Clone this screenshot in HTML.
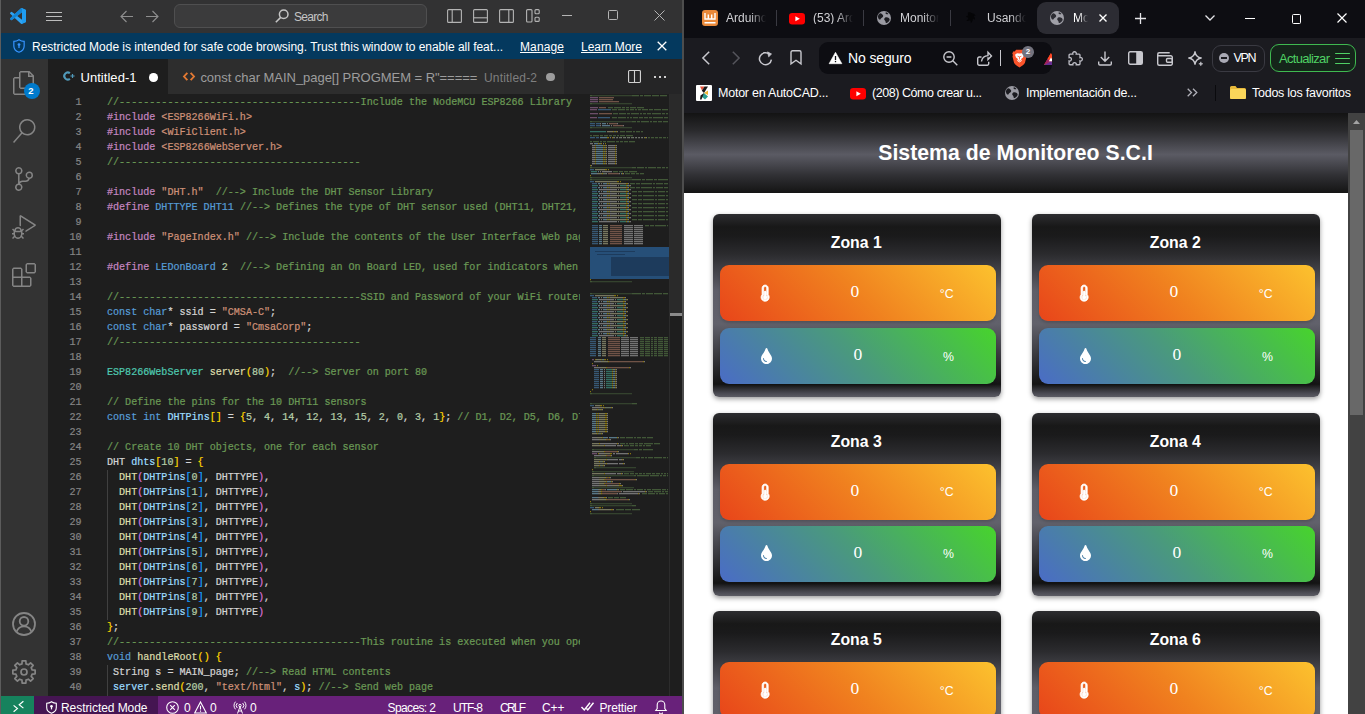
<!DOCTYPE html>
<html lang="es">
<head>
<meta charset="utf-8">
<title>Screenshot</title>
<style>
*{box-sizing:border-box;margin:0;padding:0}
html,body{width:1365px;height:714px;overflow:hidden;background:#1e1e1e}
body{position:relative;font-family:"Liberation Sans",sans-serif;color:#ccc}
.abs{position:absolute}
.tx{position:absolute;white-space:pre;line-height:1;display:block}
svg{position:absolute;overflow:visible}
/* ---------- VS CODE ---------- */
#vsc{position:absolute;left:0;top:0;width:684px;height:714px;background:#1e1e1e;overflow:hidden}
#vsc .lb{position:absolute;left:0;top:0;width:1px;height:714px;background:#5c5c5c;z-index:20}
#vsc .rb{position:absolute;left:682px;top:0;width:2px;height:714px;background:#4d4d4d;z-index:20}
#tbar{position:absolute;left:0;top:0;width:684px;height:33px;background:#323233}
#search{position:absolute;left:174px;top:4px;width:253px;height:24px;border:1px solid #4f4f50;border-radius:6px;background:#3b3b3c}
#banner{position:absolute;left:0;top:33px;width:684px;height:26px;background:#04395e}
#actbar{position:absolute;left:0;top:59px;width:48px;height:637px;background:#333333}
#tabs{position:absolute;left:48px;top:59px;width:636px;height:35px;background:#252526}
#tab1{position:absolute;left:0;top:0;width:119.5px;height:35px;background:#1e1e1e}
#tab2{position:absolute;left:119.5px;top:0;width:396px;height:35px;background:#2d2d2d}
#code{position:absolute;left:48px;top:95px;width:533.5px;height:601px;overflow:hidden;-webkit-text-stroke:.22px;font-family:"Liberation Mono",monospace;font-size:10.07px;line-height:15px;color:#d4d4d4;white-space:pre}
#code .ln{position:absolute;left:0;width:33.5px;text-align:right;color:#858585}
#code .cl{position:absolute;left:59px}
.xc{color:#6a9955}.xp{color:#c586c0}.xs{color:#ce9178}.xk{color:#569cd6}.xv{color:#9cdcfe}.xt{color:#4ec9b0}.xn{color:#b5cea8}.xf{color:#dcdcaa}.xb1{color:#ffd700}.xb2{color:#da70d6}.xb3{color:#179fff}
#mini{position:absolute;left:580px;top:94px;width:102px;height:602px;background:#1e1e1e;overflow:hidden}
#status{position:absolute;left:0;top:696px;width:684px;height:18px;background:#68217a;overflow:hidden}
#status .r{position:absolute;left:0;top:0;width:34px;height:18px;background:#16825d}
#status .rm{position:absolute;left:34px;top:0;width:123.5px;height:18px;background:#451552}
/* ---------- BROWSER ---------- */
#br{position:absolute;left:684px;top:0;width:681px;height:714px;background:#fff;overflow:hidden}
#btabs{position:absolute;left:0;top:0;width:681px;height:38px;background:#0d0d12}
#btool{position:absolute;left:0;top:38px;width:681px;height:75px;background:#1b1b20}
#atab{position:absolute;left:353px;top:2px;width:82px;height:32px;border-radius:9px;background:#2c2c33}
#addr{position:absolute;left:135px;top:42px;width:233px;height:32px;border-radius:9px;background:#0d0d12;overflow:hidden}
#vpn{position:absolute;left:527.5px;top:44.5px;width:53px;height:27px;border:1px solid #3a3a42;border-radius:9px}
#upd{position:absolute;left:586px;top:44px;width:86px;height:28px;border:1.5px solid #3fb950;border-radius:9px;background:#15251a}
.tsep{position:absolute;top:10px;width:1px;height:16px;background:#3a3a42}
#page{position:absolute;left:0;top:113px;width:664px;height:601px;background:#fff;overflow:hidden}
#phead{position:absolute;left:0;top:0;width:664px;height:80px;background:linear-gradient(180deg,#131313 0%,#2a2a2d 22%,#5b5b64 52%,#303034 78%,#141414 100%)}
.card{position:absolute;width:287.5px;height:183px;border-radius:6px;background:linear-gradient(180deg,#2d2d30 0%,#181818 7%,#1a1a1b 12%,#2b2b2e 22%,#5e5e68 42%,#61616b 60%,#141414 93%,#4a4a52 98%,#5c5c64 100%);box-shadow:0 2px 5px rgba(0,0,0,.4)}
.row{position:absolute;left:7px;width:276px;height:56px;border-radius:9px;box-shadow:0 2px 3px rgba(0,0,0,.16)}
.row.tp{top:51px;background:linear-gradient(45deg,#e8451a 0%,#f0821f 50%,#fcc22e 100%)}
.row.hm{top:114px;background:linear-gradient(45deg,#4a6cc6 0%,#4a9a7c 50%,#47d42c 100%)}
#sb{position:absolute;left:664px;top:113px;width:17px;height:601px;background:#424242}
#sb .th{position:absolute;left:2px;top:17px;width:13px;height:285px;background:#686868}
</style>
</head>
<body>
<div id="vsc">
<div class="lb"></div><div class="rb"></div>
<div id="tbar">
<svg style="left:10px;top:8px" width="16" height="16" viewBox="0 0 100 100"><path d="M96.5 10.8 75.9 0.9a6.2 6.2 0 0 0-7.1 1.2L29.4 38.1 12.2 25.1a4.2 4.2 0 0 0-5.3.2L1.4 30.3a4.2 4.2 0 0 0 0 6.2L16.3 50 1.4 63.5a4.2 4.2 0 0 0 0 6.2l5.5 5a4.2 4.2 0 0 0 5.3.2l17.2-13 39.4 36a6.2 6.2 0 0 0 7.1 1.2l20.6-9.9A6.2 6.2 0 0 0 100 83.6V16.4a6.2 6.2 0 0 0-3.5-5.6zM75 72.7 45.1 50 75 27.3z" fill="#2ea3f2"/><path d="M75.9 99.1a6.2 6.2 0 0 1-7.1-1.2c2.3 2.3 6.2.7 6.2-2.6V4.7c0-3.3-3.9-4.9-6.2-2.6a6.2 6.2 0 0 1 7.1-1.2l20.6 9.9a6.2 6.2 0 0 1 3.5 5.6v67.2a6.2 6.2 0 0 1-3.5 5.6z" fill="#1f9cf0"/><path d="M1.400 63.500 68.800 2.100C71.100-.2 75 1.400 75 4.700v22.600L12.200 74.900a4.200 4.200 0 0 1-5.300-.2l-5.500-5a4.200 4.200 0 0 1 0-6.200z" fill="#0b7fd0" opacity=".85"/></svg>
<div class="abs" style="left:46px;top:12px;width:16px;height:1px;background:#bdbdbd"></div>
<div class="abs" style="left:46px;top:16px;width:16px;height:1px;background:#bdbdbd"></div>
<div class="abs" style="left:46px;top:20px;width:16px;height:1px;background:#bdbdbd"></div>
<svg style="left:120px;top:10px" width="14" height="13" viewBox="0 0 14 13" fill="none" stroke="#8f8f8f" stroke-width="1.1"><path d="M13 6.5H1.2M6.5 1 1 6.5 6.5 12"/></svg>
<svg style="left:145px;top:10px" width="14" height="13" viewBox="0 0 14 13" fill="none" stroke="#8f8f8f" stroke-width="1.1"><path d="M1 6.5h11.8M7.5 1 13 6.5 7.5 12"/></svg>
<div id="search"></div>
<svg style="left:275px;top:8.5px" width="14" height="14" viewBox="0 0 14 14" fill="none" stroke="#c5c5c5" stroke-width="1.5"><circle cx="8.7" cy="5.3" r="4.3"/><path d="M5.7 8.4 0.8 13.3"/></svg>
<!-- layout icons -->
<svg style="left:447px;top:9px" width="15" height="14" viewBox="0 0 15 14" fill="none" stroke="#b4b4b4" stroke-width="1.1"><rect x=".6" y=".6" width="13.8" height="12.8" rx="1"/><path d="M5.2.6v12.8"/></svg>
<svg style="left:473px;top:9px" width="15" height="14" viewBox="0 0 15 14" fill="none" stroke="#b4b4b4" stroke-width="1.1"><rect x=".6" y=".6" width="13.8" height="12.8" rx="1"/><path d="M.6 8.8h13.8"/></svg>
<svg style="left:499px;top:9px" width="15" height="14" viewBox="0 0 15 14" fill="none" stroke="#b4b4b4" stroke-width="1.1"><rect x=".6" y=".6" width="13.8" height="12.8" rx="1"/><path d="M9.8.6v12.8"/></svg>
<svg style="left:526px;top:9px" width="14" height="14" viewBox="0 0 14 14" fill="none" stroke="#b4b4b4" stroke-width="1.1"><rect x=".6" y=".6" width="5.4" height="12.4" rx="1"/><rect x="9" y=".6" width="4.2" height="4.2" rx="1"/><rect x="9" y="8.2" width="4.2" height="4.2" rx="1"/></svg>
<div class="abs" style="left:562px;top:15px;width:10px;height:1px;background:#b4b4b4"></div>
<div class="abs" style="left:608px;top:10px;width:10px;height:10px;border:1px solid #b4b4b4;border-radius:1.5px"></div>
<svg style="left:654px;top:10px" width="11" height="11" viewBox="0 0 11 11" fill="none" stroke="#b4b4b4" stroke-width="1"><path d="M.5.5l10 10M10.5.5l-10 10"/></svg>
</div>
<div id="banner">
<svg style="left:12.5px;top:6px" width="12" height="14" viewBox="0 0 11 13"><path d="M5.5.7C4 1.7 2.4 2.2.7 2.2v4.3c0 2.7 1.9 4.8 4.8 5.8 2.9-1 4.8-3.1 4.8-5.8V2.2C8.6 2.2 7 1.7 5.5.7z" fill="none" stroke="#3794ff" stroke-width="1.1"/><circle cx="5.5" cy="5.2" r="1.3" fill="#3794ff"/><rect x="4.9" y="5.8" width="1.2" height="2.6" fill="#3794ff"/></svg>
<svg style="left:657px;top:8px" width="10" height="10" viewBox="0 0 10 10" fill="none" stroke="#fff" stroke-width="1.3"><path d="M.7.7l8.6 8.6M9.3.7l-8.6 8.6"/></svg>
</div>
<div id="actbar">
<!-- files -->
<svg style="left:12px;top:12px" width="24" height="24" viewBox="0 0 24 24"><path fill="#858585" d="M17.5 0h-9L7 1.5V6H2.5L1 7.5v15.07L2.5 24h12.07L16 22.57V18h4.7l1.3-1.43V4.5L17.5 0zm0 2.120 2.380 2.380H17.5V2.120zm-3 20.380h-12v-15H7v9.07L8.5 18h6v4.5zm6-6h-12v-15H16V6h4.5v10.5z"/></svg>
<div class="abs" style="left:23.5px;top:24px;width:16px;height:16px;border-radius:8px;background:#007acc"></div>
<!-- search -->
<svg style="left:12px;top:60px" width="24" height="24" viewBox="0 0 24 24"><path fill="#858585" d="M15.25 0a8.25 8.25 0 0 0-6.18 13.72L1 22.88l1.120 1 8.05-9.120A8.251 8.251 0 1 0 15.25.01V0zm0 15a6.75 6.75 0 1 1 0-13.5 6.75 6.75 0 0 1 0 13.5z"/></svg>
<!-- scm -->
<svg style="left:12px;top:108px" width="24" height="24" viewBox="0 0 24 24"><path fill="#858585" d="M21.007 8.222A3.738 3.738 0 0 0 15.045 5.2a3.737 3.737 0 0 0 1.156 6.583 2.988 2.988 0 0 1-2.668 1.67h-2.99a4.456 4.456 0 0 0-2.989 1.165V7.4a3.737 3.737 0 1 0-1.494 0v9.117a3.776 3.776 0 1 0 1.816.099 2.99 2.99 0 0 1 2.668-1.667h2.99a4.484 4.484 0 0 0 4.223-3.039 3.736 3.736 0 0 0 3.25-3.687zM4.565 3.738a2.242 2.242 0 1 1 4.484 0 2.242 2.242 0 0 1-4.484 0zm4.484 16.441a2.242 2.242 0 1 1-4.484 0 2.242 2.242 0 0 1 4.484 0zm8.221-9.715a2.242 2.242 0 1 1 0-4.485 2.242 2.242 0 0 1 0 4.485z"/></svg>
<!-- debug -->
<svg style="left:12px;top:156px" width="24" height="24" viewBox="0 0 24 24"><path fill="#858585" d="M10.94 13.5l-1.32 1.32a3.73 3.73 0 0 0-7.24 0L1.06 13.5 0 14.56l1.72 1.72-.22.22V18H0v1.5h1.5v.08c.077.489.214.966.41 1.42L0 22.94 1.06 24l1.65-1.65A4.308 4.308 0 0 0 6 24a4.31 4.31 0 0 0 3.29-1.65L10.94 24 12 22.94 10.09 21c.198-.464.336-.951.41-1.45v-.1H12V18h-1.5v-1.5l-.22-.22L12 14.56l-1.06-1.06zM6 13.5a2.25 2.25 0 0 1 2.25 2.25h-4.5A2.25 2.25 0 0 1 6 13.5zm3 6a3.33 3.33 0 0 1-3 3 3.33 3.33 0 0 1-3-3v-2.25h6v2.25zm14.76-9.9v1.26L13.5 17.37V15.6l8.5-5.37L9 2v9.46a5.07 5.07 0 0 0-1.5-.72V.63L8.64 0l15.120 9.6z"/></svg>
<!-- extensions -->
<svg style="left:12px;top:204px" width="24" height="24" viewBox="0 0 24 24"><path fill="#858585" d="M13.5 1.5L15 0h7.5L24 1.5V9l-1.5 1.5H15L13.5 9V1.5zm1.5 0V9h7.5V1.5H15zM0 15V6l1.5-1.5H9L10.5 6v7.5H18l1.5 1.5v7.5L18 24H1.5L0 22.5V15zm9-1.5V6H1.5v7.5H9zM9 15H1.5v7.5H9V15zm1.5 7.5H18V15h-7.5v7.5z"/></svg>
<!-- account -->
<svg style="left:12px;top:553px" width="24" height="24" viewBox="0 0 24 24" fill="none" stroke="#858585" stroke-width="1.8"><circle cx="12" cy="12" r="11"/><circle cx="12" cy="9.3" r="4.3"/><path d="M4.6 19.8c1.2-3.6 4-5.4 7.4-5.4s6.2 1.8 7.4 5.4"/></svg>
<!-- gear -->
<svg style="left:12px;top:601px" width="24" height="24" viewBox="0 0 24 24" fill="none" stroke="#858585" stroke-width="1.7" stroke-linejoin="round"><path d="M9.97 3.85L10.14 0.85L13.86 0.85L14.03 3.85L16.33 4.80L18.57 2.81L21.19 5.43L19.20 7.67L20.15 9.97L23.15 10.14L23.15 13.86L20.15 14.03L19.20 16.33L21.19 18.57L18.57 21.19L16.33 19.20L14.03 20.15L13.86 23.15L10.14 23.15L9.97 20.15L7.67 19.20L5.43 21.19L2.81 18.57L4.80 16.33L3.85 14.03L0.85 13.86L0.85 10.14L3.85 9.97L4.80 7.67L2.81 5.43L5.43 2.81L7.67 4.80z"/><circle cx="12" cy="12" r="3"/></svg>
</div>
<div id="tabs">
<div id="tab1"></div><div id="tab2"></div>
<!-- c++ icon -->
<svg style="left:14.5px;top:11.5px" width="12" height="10" viewBox="0 0 12 10" fill="none" stroke="#519aba"><path d="M6.9 2.2A3.5 3.5 0 1 0 6.9 7.8" stroke-width="2.1"/><path d="M7.4 5h4.2M9.5 3v4" stroke-width="1.2"/></svg>
<div class="abs" style="left:101px;top:14px;width:8.5px;height:8.5px;border-radius:50%;background:#fff"></div>
<svg style="left:134.5px;top:12.5px" width="12" height="9" viewBox="0 0 11 8" fill="none" stroke="#e37933" stroke-width="1.7"><path d="M4 .6.9 4 4 7.4M7 .6 10.1 4 7 7.4"/></svg>
<div class="abs" style="left:498px;top:13.5px;width:8.5px;height:8.5px;border-radius:50%;background:#9d9d9d"></div>
<svg style="left:580px;top:11px" width="13" height="13" viewBox="0 0 14 14" fill="none" stroke="#d0d0d0" stroke-width="1.2"><rect x=".6" y=".6" width="12.8" height="12.8" rx="1"/><path d="M7 .6v12.8"/></svg>
<div class="abs" style="left:606px;top:17px;width:2px;height:2px;background:#d0d0d0;box-shadow:5px 0 #d0d0d0,10px 0 #d0d0d0"></div>
</div>
<div id="code"><div class="ln" style="top:0px">1</div>
<div class="cl" style="top:0px"><span class="xc">//----------------------------------------Include the NodeMCU ESP8266 Library</span></div>
<div class="ln" style="top:15px">2</div>
<div class="cl" style="top:15px"><span class="xp">#include </span><span class="xs">&lt;ESP8266WiFi.h&gt;</span></div>
<div class="ln" style="top:30px">3</div>
<div class="cl" style="top:30px"><span class="xp">#include </span><span class="xs">&lt;WiFiClient.h&gt;</span></div>
<div class="ln" style="top:45px">4</div>
<div class="cl" style="top:45px"><span class="xp">#include </span><span class="xs">&lt;ESP8266WebServer.h&gt;</span></div>
<div class="ln" style="top:60px">5</div>
<div class="cl" style="top:60px"><span class="xc">//----------------------------------------</span></div>
<div class="ln" style="top:75px">6</div>
<div class="ln" style="top:90px">7</div>
<div class="cl" style="top:90px"><span class="xp">#include </span><span class="xs">"DHT.h"</span>  <span class="xc">//--&gt; Include the DHT Sensor Library</span></div>
<div class="ln" style="top:105px">8</div>
<div class="cl" style="top:105px"><span class="xp">#define </span><span class="xk">DHTTYPE DHT11</span> <span class="xc">//--&gt; Defines the type of DHT sensor used (DHT11, DHT21, and DHT22), in this project the sensor used is DHT11.</span></div>
<div class="ln" style="top:120px">9</div>
<div class="ln" style="top:135px">10</div>
<div class="cl" style="top:135px"><span class="xp">#include </span><span class="xs">"PageIndex.h"</span> <span class="xc">//--&gt; Include the contents of the User Interface Web page, stored in the same folder as the .ino file</span></div>
<div class="ln" style="top:150px">11</div>
<div class="ln" style="top:165px">12</div>
<div class="cl" style="top:165px"><span class="xp">#define </span><span class="xk">LEDonBoard</span> <span class="xn">2</span>  <span class="xc">//--&gt; Defining an On Board LED, used for indicators when the process of connecting to a wifi router</span></div>
<div class="ln" style="top:180px">13</div>
<div class="ln" style="top:195px">14</div>
<div class="cl" style="top:195px"><span class="xc">//----------------------------------------SSID and Password of your WiFi router</span></div>
<div class="ln" style="top:210px">15</div>
<div class="cl" style="top:210px"><span class="xk">const char</span>* ssid = <span class="xs">"CMSA-C"</span>;</div>
<div class="ln" style="top:225px">16</div>
<div class="cl" style="top:225px"><span class="xk">const char</span>* password = <span class="xs">"CmsaCorp"</span>;</div>
<div class="ln" style="top:240px">17</div>
<div class="cl" style="top:240px"><span class="xc">//----------------------------------------</span></div>
<div class="ln" style="top:255px">18</div>
<div class="ln" style="top:270px">19</div>
<div class="cl" style="top:270px"><span class="xt">ESP8266WebServer</span> <span class="xf">server</span><span class="xb1">(</span><span class="xn">80</span><span class="xb1">)</span>;  <span class="xc">//--&gt; Server on port 80</span></div>
<div class="ln" style="top:285px">20</div>
<div class="ln" style="top:300px">21</div>
<div class="cl" style="top:300px"><span class="xc">// Define the pins for the 10 DHT11 sensors</span></div>
<div class="ln" style="top:315px">22</div>
<div class="cl" style="top:315px"><span class="xk">const int</span> <span class="xv">DHTPins</span><span class="xb1">[]</span> = <span class="xb1">{</span><span class="xn">5</span>, <span class="xn">4</span>, <span class="xn">14</span>, <span class="xn">12</span>, <span class="xn">13</span>, <span class="xn">15</span>, <span class="xn">2</span>, <span class="xn">0</span>, <span class="xn">3</span>, <span class="xn">1</span><span class="xb1">}</span>; <span class="xc">// D1, D2, D5, D6, D7, D8, D4, D3, RX, TX</span></div>
<div class="ln" style="top:330px">23</div>
<div class="ln" style="top:345px">24</div>
<div class="cl" style="top:345px"><span class="xc">// Create 10 DHT objects, one for each sensor</span></div>
<div class="ln" style="top:360px">25</div>
<div class="cl" style="top:360px">DHT <span class="xv">dhts</span><span class="xb1">[</span><span class="xn">10</span><span class="xb1">]</span> = <span class="xb1">{</span></div>
<div class="ln" style="top:375px">26</div>
<div class="cl" style="top:375px">  <span class="xf">DHT</span><span class="xb2">(</span><span class="xv">DHTPins</span><span class="xb3">[</span><span class="xn">0</span><span class="xb3">]</span>, DHTTYPE<span class="xb2">)</span>,</div>
<div class="ln" style="top:390px">27</div>
<div class="cl" style="top:390px">  <span class="xf">DHT</span><span class="xb2">(</span><span class="xv">DHTPins</span><span class="xb3">[</span><span class="xn">1</span><span class="xb3">]</span>, DHTTYPE<span class="xb2">)</span>,</div>
<div class="ln" style="top:405px">28</div>
<div class="cl" style="top:405px">  <span class="xf">DHT</span><span class="xb2">(</span><span class="xv">DHTPins</span><span class="xb3">[</span><span class="xn">2</span><span class="xb3">]</span>, DHTTYPE<span class="xb2">)</span>,</div>
<div class="ln" style="top:420px">29</div>
<div class="cl" style="top:420px">  <span class="xf">DHT</span><span class="xb2">(</span><span class="xv">DHTPins</span><span class="xb3">[</span><span class="xn">3</span><span class="xb3">]</span>, DHTTYPE<span class="xb2">)</span>,</div>
<div class="ln" style="top:435px">30</div>
<div class="cl" style="top:435px">  <span class="xf">DHT</span><span class="xb2">(</span><span class="xv">DHTPins</span><span class="xb3">[</span><span class="xn">4</span><span class="xb3">]</span>, DHTTYPE<span class="xb2">)</span>,</div>
<div class="ln" style="top:450px">31</div>
<div class="cl" style="top:450px">  <span class="xf">DHT</span><span class="xb2">(</span><span class="xv">DHTPins</span><span class="xb3">[</span><span class="xn">5</span><span class="xb3">]</span>, DHTTYPE<span class="xb2">)</span>,</div>
<div class="ln" style="top:465px">32</div>
<div class="cl" style="top:465px">  <span class="xf">DHT</span><span class="xb2">(</span><span class="xv">DHTPins</span><span class="xb3">[</span><span class="xn">6</span><span class="xb3">]</span>, DHTTYPE<span class="xb2">)</span>,</div>
<div class="ln" style="top:480px">33</div>
<div class="cl" style="top:480px">  <span class="xf">DHT</span><span class="xb2">(</span><span class="xv">DHTPins</span><span class="xb3">[</span><span class="xn">7</span><span class="xb3">]</span>, DHTTYPE<span class="xb2">)</span>,</div>
<div class="ln" style="top:495px">34</div>
<div class="cl" style="top:495px">  <span class="xf">DHT</span><span class="xb2">(</span><span class="xv">DHTPins</span><span class="xb3">[</span><span class="xn">8</span><span class="xb3">]</span>, DHTTYPE<span class="xb2">)</span>,</div>
<div class="ln" style="top:510px">35</div>
<div class="cl" style="top:510px">  <span class="xf">DHT</span><span class="xb2">(</span><span class="xv">DHTPins</span><span class="xb3">[</span><span class="xn">9</span><span class="xb3">]</span>, DHTTYPE<span class="xb2">)</span></div>
<div class="ln" style="top:525px">36</div>
<div class="cl" style="top:525px"><span class="xb1">}</span>;</div>
<div class="ln" style="top:540px">37</div>
<div class="cl" style="top:540px"><span class="xc">//----------------------------------------This routine is executed when you open NodeMCU ESP8266 IP Address in browser</span></div>
<div class="ln" style="top:555px">38</div>
<div class="cl" style="top:555px"><span class="xk">void</span> <span class="xf">handleRoot</span><span class="xb1">()</span> <span class="xb1">{</span></div>
<div class="ln" style="top:570px">39</div>
<div class="cl" style="top:570px"> String s = MAIN_page; <span class="xc">//--&gt; Read HTML contents</span></div>
<div class="ln" style="top:585px">40</div>
<div class="cl" style="top:585px"> <span class="xv">server</span>.<span class="xf">send</span><span class="xb1">(</span><span class="xn">200</span>, <span class="xs">"text/html"</span>, <span class="xv">s</span><span class="xb1">)</span>; <span class="xc">//--&gt; Send web page</span></div>
<div class="abs" style="left:59px;top:375px;width:1px;height:150px;background:#404040"></div>
<div class="abs" style="left:59px;top:570px;width:1px;height:34px;background:#404040"></div></div>
<div id="mini"><svg style="left:0;top:0" width="102" height="602" viewBox="0 0 102 602" shape-rendering="crispEdges">
<rect x="10" y="152.5" width="79" height="32.5" fill="#264f78"/>
<rect x="31" y="162.5" width="58" height="19.5" fill="#1d3b5c"/>
<rect x="15" y="156.5" width="40" height="1" fill="#1d3b5c"/>
<rect x="17" y="159.5" width="28" height="1" fill="#1d3b5c"/>
<g id="mmg">
<path d="M10 1.5h2M52 1.5h7M60 1.5h3M64 1.5h7M72 1.5h7M80 1.5h7M10 9.5h2M28 13.5h5M34 13.5h7M42 13.5h3M46 13.5h3M50 13.5h6M57 13.5h7M32 15.5h5M38 15.5h7M46 15.5h3M50 15.5h4M55 15.5h2M58 15.5h3M62 15.5h6M69 15.5h4M74 15.5h7M82 15.5h6M33 19.5h5M39 19.5h7M47 19.5h3M51 19.5h8M60 19.5h2M63 19.5h3M67 19.5h4M72 19.5h9M82 19.5h3M86 19.5h2M32 23.5h5M38 23.5h8M47 23.5h2M50 23.5h2M53 23.5h5M59 23.5h4M64 23.5h4M69 23.5h3M73 23.5h10M84 23.5h4M10 27.5h2M52 27.5h4M57 27.5h3M61 27.5h8M70 27.5h2M73 27.5h4M78 27.5h4M83 27.5h5M10 33.5h2M40 37.5h5M46 37.5h6M53 37.5h2M56 37.5h4M61 37.5h2M10 41.5h2M13 41.5h6M20 41.5h3M24 41.5h4M29 41.5h3M33 41.5h3M37 41.5h2M40 41.5h5M46 41.5h7M68 43.5h2M71 43.5h3M75 43.5h3M79 43.5h3M83 43.5h3M87 43.5h1M10 47.5h2M13 47.5h6M20 47.5h2M23 47.5h3M27 47.5h8M36 47.5h3M40 47.5h3M44 47.5h4M49 47.5h6M10 73.5h2M52 73.5h4M57 73.5h7M65 73.5h2M68 73.5h8M77 73.5h4M82 73.5h3M86 73.5h2M33 77.5h5M39 77.5h4M44 77.5h4M49 77.5h8M45 79.5h5M51 79.5h4M56 79.5h3M60 79.5h4M10 83.5h2M10 85.5h2M52 85.5h9M62 85.5h3M66 85.5h7M74 85.5h3M78 85.5h10M50 89.5h5M56 89.5h4M61 89.5h11M73 89.5h2M76 89.5h7M84 89.5h4M50 93.5h5M56 93.5h4M61 93.5h11M73 93.5h2M76 93.5h7M84 93.5h4M52 97.5h5M58 97.5h4M63 97.5h11M75 97.5h2M78 97.5h7M86 97.5h2M52 101.5h5M58 101.5h4M63 101.5h11M75 101.5h2M78 101.5h7M86 101.5h2M52 105.5h5M58 105.5h4M63 105.5h11M75 105.5h2M78 105.5h7M86 105.5h2M52 109.5h5M58 109.5h4M63 109.5h11M75 109.5h2M78 109.5h7M86 109.5h2M52 113.5h5M58 113.5h4M63 113.5h11M75 113.5h2M78 113.5h7M86 113.5h2M52 117.5h5M58 117.5h4M63 117.5h11M75 117.5h2M78 117.5h7M86 117.5h2M52 121.5h5M58 121.5h4M63 121.5h11M75 121.5h2M78 121.5h7M86 121.5h2M52 125.5h5M58 125.5h4M63 125.5h11M75 125.5h2M78 125.5h7M86 125.5h2M65 131.5h4M70 131.5h4M75 131.5h11M87 131.5h1M10 187.5h2M10 199.5h2M52 199.5h9M62 199.5h3M66 199.5h7M74 199.5h8M83 199.5h5M60 243.5h4M65 243.5h5M71 243.5h2M74 243.5h3M78 243.5h5M84 243.5h4M60 245.5h4M65 245.5h5M71 245.5h2M74 245.5h3M78 245.5h5M84 245.5h4M60 247.5h4M65 247.5h5M71 247.5h2M74 247.5h3M78 247.5h5M84 247.5h4M60 249.5h4M65 249.5h5M71 249.5h2M74 249.5h3M78 249.5h5M84 249.5h4M60 251.5h4M65 251.5h5M71 251.5h2M74 251.5h3M78 251.5h5M84 251.5h4M60 253.5h4M65 253.5h5M71 253.5h2M74 253.5h3M78 253.5h5M84 253.5h4M60 255.5h4M65 255.5h5M71 255.5h2M74 255.5h3M78 255.5h5M84 255.5h4M60 257.5h4M65 257.5h5M71 257.5h2M74 257.5h3M78 257.5h5M84 257.5h4M60 259.5h4M65 259.5h5M71 259.5h2M74 259.5h3M78 259.5h5M84 259.5h4M60 261.5h4M65 261.5h5M71 261.5h2M74 261.5h3M78 261.5h5M84 261.5h4M10 299.5h2M10 309.5h2M52 309.5h5M40 343.5h5M46 343.5h7M54 343.5h2M57 343.5h4M62 343.5h4M67 343.5h6M40 349.5h5M46 349.5h2M49 349.5h5M55 349.5h3M59 349.5h4M64 349.5h9M74 349.5h6M44 351.5h5M50 351.5h4M55 351.5h3M59 351.5h3M63 351.5h2M66 351.5h5M12 355.5h2M54 355.5h4M59 355.5h3M63 355.5h10M14 363.5h2M56 363.5h4M61 363.5h3M65 363.5h2M68 363.5h5M74 363.5h8M83 363.5h3M87 363.5h1M14 373.5h2M12 377.5h2M44 379.5h5M50 379.5h4M55 379.5h3M59 379.5h3M63 379.5h2M66 379.5h5M72 379.5h3M76 379.5h4M81 379.5h2M84 379.5h2M87 379.5h1M12 381.5h2M54 381.5h2M57 381.5h12M70 381.5h9M80 381.5h2M83 381.5h3M87 381.5h1M12 393.5h2M40 395.5h5M46 395.5h7M54 395.5h2M57 395.5h6M64 395.5h2M67 395.5h4M72 395.5h9M82 395.5h4M87 395.5h1M68 397.5h5M74 397.5h7M82 397.5h2M85 397.5h3M62 399.5h5M68 399.5h7M76 399.5h2M79 399.5h6M86 399.5h2M28 403.5h5M34 403.5h5M40 403.5h6M10 409.5h2M10 411.5h2M52 411.5h4M36 415.5h8M45 415.5h6M52 415.5h8M10 419.5h2" stroke="#6a9955" stroke-opacity=".47" stroke-width="1"/>
<path d="M12 1.5h40M12 9.5h40M12 27.5h40M12 33.5h40M12 73.5h40M12 83.5h40M12 85.5h40M12 187.5h40M12 199.5h40M12 299.5h40M12 309.5h40M14 355.5h40M16 363.5h40M16 373.5h40M14 377.5h40M14 381.5h40M14 393.5h40M12 409.5h40M12 411.5h40M12 419.5h40" stroke="#6a9955" stroke-opacity=".3" stroke-width="1"/>
<path d="M10 3.5h8M10 5.5h8M10 7.5h8M10 13.5h8M10 15.5h7M10 19.5h8M10 23.5h7M12 265.5h2M12 271.5h4M12 359.5h5" stroke="#c586c0" stroke-opacity=".47" stroke-width="1"/>
<path d="M19 3.5h15M19 5.5h14M19 7.5h20M19 13.5h7M19 19.5h13M29 29.5h8M33 31.5h10M28 79.5h11M30 131.5h12M30 133.5h12M30 135.5h12M30 137.5h12M30 139.5h12M30 141.5h12M30 143.5h12M30 145.5h12M30 147.5h12M30 149.5h12M28 243.5h12M28 245.5h12M28 247.5h12M28 249.5h12M28 251.5h12M28 253.5h12M28 255.5h12M28 257.5h12M28 259.5h12M28 261.5h12M29 267.5h34M27 273.5h22M27 345.5h2M25 357.5h12M27 361.5h3M27 383.5h2M25 385.5h30M25 389.5h14M22 395.5h3M22 397.5h19M22 399.5h15M27 405.5h21" stroke="#ce9178" stroke-opacity=".47" stroke-width="1"/>
<path d="M18 15.5h13M18 23.5h12M10 29.5h5M16 29.5h4M10 31.5h5M16 31.5h4M10 43.5h5M16 43.5h3M10 75.5h4M10 87.5h4M12 89.5h5M12 93.5h5M12 97.5h5M12 101.5h5M12 105.5h5M12 109.5h5M12 113.5h5M12 117.5h5M12 121.5h5M12 125.5h5M12 131.5h6M12 133.5h6M12 135.5h6M12 137.5h6M12 139.5h6M12 141.5h6M12 143.5h6M12 145.5h6M12 147.5h6M12 149.5h6M10 201.5h4M12 203.5h5M12 207.5h5M12 211.5h5M12 215.5h5M12 219.5h5M12 223.5h5M12 227.5h5M12 231.5h5M12 235.5h5M12 239.5h5M10 243.5h6M10 245.5h6M10 247.5h6M10 249.5h6M10 251.5h6M10 253.5h6M10 255.5h6M10 257.5h6M10 259.5h6M10 261.5h6M14 275.5h5M14 277.5h5M14 279.5h5M14 281.5h5M14 283.5h5M14 285.5h5M14 287.5h5M14 289.5h5M14 291.5h5M14 293.5h5M10 311.5h4M10 413.5h4" stroke="#569cd6" stroke-opacity=".47" stroke-width="1"/>
<path d="M20 29.5h1M27 29.5h1M37 29.5h1M20 31.5h1M31 31.5h1M43 31.5h1M37 37.5h1M30 43.5h1M34 43.5h1M37 43.5h1M41 43.5h1M45 43.5h1M49 43.5h1M53 43.5h1M56 43.5h1M59 43.5h1M62 43.5h1M66 43.5h1M10 49.5h3M23 49.5h1M12 51.5h3M26 51.5h1M28 51.5h7M36 51.5h1M12 53.5h3M26 53.5h1M28 53.5h7M36 53.5h1M12 55.5h3M26 55.5h1M28 55.5h7M36 55.5h1M12 57.5h3M26 57.5h1M28 57.5h7M36 57.5h1M12 59.5h3M26 59.5h1M28 59.5h7M36 59.5h1M12 61.5h3M26 61.5h1M28 61.5h7M36 61.5h1M12 63.5h3M26 63.5h1M28 63.5h7M36 63.5h1M12 65.5h3M26 65.5h1M28 65.5h7M36 65.5h1M12 67.5h3M26 67.5h1M28 67.5h7M36 67.5h1M12 69.5h3M26 69.5h1M28 69.5h7M36 69.5h1M11 71.5h1M20 77.5h1M22 77.5h9M31 77.5h1M17 79.5h1M26 79.5h1M39 79.5h1M43 79.5h1M21 89.5h1M30 89.5h1M48 89.5h1M19 91.5h18M38 91.5h1M50 91.5h1M21 93.5h1M30 93.5h1M48 93.5h1M19 95.5h18M38 95.5h1M50 95.5h1M21 97.5h1M30 97.5h1M48 97.5h1M19 99.5h18M38 99.5h1M50 99.5h1M21 101.5h1M30 101.5h1M48 101.5h1M19 103.5h18M38 103.5h1M50 103.5h1M21 105.5h1M30 105.5h1M48 105.5h1M19 107.5h18M38 107.5h1M50 107.5h1M21 109.5h1M30 109.5h1M48 109.5h1M19 111.5h18M38 111.5h1M50 111.5h1M21 113.5h1M30 113.5h1M48 113.5h1M19 115.5h18M38 115.5h1M50 115.5h1M21 117.5h1M30 117.5h1M48 117.5h1M19 119.5h18M38 119.5h1M50 119.5h1M21 121.5h1M30 121.5h1M48 121.5h1M19 123.5h18M38 123.5h1M50 123.5h1M21 125.5h1M30 125.5h1M48 125.5h1M19 127.5h18M38 127.5h1M50 127.5h1M44 131.5h9M54 131.5h9M44 133.5h9M54 133.5h9M44 135.5h9M54 135.5h9M44 137.5h9M54 137.5h9M44 139.5h9M54 139.5h9M44 141.5h9M54 141.5h9M44 143.5h9M54 143.5h9M44 145.5h9M54 145.5h9M44 147.5h9M54 147.5h9M44 149.5h9M54 149.5h9M21 203.5h1M30 203.5h1M45 203.5h1M19 205.5h15M35 205.5h1M47 205.5h1M21 207.5h1M30 207.5h1M45 207.5h1M19 209.5h15M35 209.5h1M47 209.5h1M21 211.5h1M30 211.5h1M45 211.5h1M19 213.5h15M35 213.5h1M47 213.5h1M21 215.5h1M30 215.5h1M45 215.5h1M19 217.5h15M35 217.5h1M47 217.5h1M21 219.5h1M30 219.5h1M45 219.5h1M19 221.5h15M35 221.5h1M47 221.5h1M21 223.5h1M30 223.5h1M45 223.5h1M19 225.5h15M35 225.5h1M47 225.5h1M21 227.5h1M30 227.5h1M45 227.5h1M19 229.5h15M35 229.5h1M47 229.5h1M21 231.5h1M30 231.5h1M45 231.5h1M19 233.5h15M35 233.5h1M47 233.5h1M21 235.5h1M30 235.5h1M45 235.5h1M19 237.5h15M35 237.5h1M47 237.5h1M21 239.5h1M30 239.5h1M45 239.5h1M19 241.5h15M35 241.5h1M47 241.5h1M41 243.5h8M50 243.5h8M41 245.5h8M50 245.5h8M41 247.5h8M50 247.5h8M41 249.5h8M50 249.5h8M41 251.5h8M50 251.5h8M41 253.5h8M50 253.5h8M41 255.5h8M50 255.5h8M41 257.5h8M50 257.5h8M41 259.5h8M50 259.5h8M41 261.5h8M50 261.5h8M14 267.5h6M20 267.5h1M64 267.5h1M14 273.5h6M20 273.5h1M50 273.5h1M24 275.5h1M36 275.5h1M24 277.5h1M36 277.5h1M24 279.5h1M36 279.5h1M24 281.5h1M36 281.5h1M24 283.5h1M36 283.5h1M24 285.5h1M36 285.5h1M24 287.5h1M36 287.5h1M24 289.5h1M36 289.5h1M24 291.5h1M36 291.5h1M24 293.5h1M36 293.5h1M12 313.5h6M18 313.5h1M32 313.5h1M22 315.5h1M19 319.5h1M27 319.5h1M19 321.5h1M27 321.5h1M19 323.5h1M27 323.5h1M19 325.5h1M27 325.5h1M19 327.5h1M27 327.5h1M19 329.5h1M27 329.5h1M19 331.5h1M27 331.5h1M19 333.5h1M27 333.5h1M19 335.5h1M27 335.5h1M19 337.5h1M27 337.5h1M22 339.5h1M12 343.5h4M16 343.5h1M27 343.5h1M38 343.5h1M12 345.5h6M18 345.5h1M30 345.5h1M20 349.5h10M30 349.5h1M31 349.5h6M38 349.5h1M25 351.5h10M35 351.5h1M37 351.5h4M42 351.5h1M12 357.5h6M18 357.5h1M38 357.5h1M19 359.5h4M23 359.5h1M33 359.5h1M34 359.5h1M36 359.5h12M14 361.5h6M20 361.5h1M31 361.5h1M27 365.5h10M37 365.5h1M39 365.5h3M43 365.5h1M24 367.5h1M27 369.5h10M37 369.5h1M39 369.5h4M44 369.5h1M24 371.5h1M25 379.5h10M35 379.5h1M37 379.5h4M42 379.5h1M12 383.5h6M18 383.5h1M30 383.5h1M12 385.5h6M18 385.5h1M56 385.5h1M12 387.5h6M18 387.5h1M32 387.5h1M12 389.5h6M18 389.5h1M40 389.5h1M12 391.5h6M18 391.5h1M27 391.5h4M31 391.5h1M42 391.5h1M18 395.5h1M25 395.5h1M38 395.5h1M18 397.5h1M41 397.5h1M43 397.5h22M66 397.5h1M18 399.5h1M37 399.5h1M39 399.5h19M59 399.5h1M18 403.5h1M26 403.5h1M12 405.5h6M18 405.5h1M49 405.5h1M18 415.5h1M33 415.5h1" stroke="#d4d4d4" stroke-opacity=".47" stroke-width="1"/>
<path d="M22 29.5h4M22 31.5h8M20 43.5h7M14 49.5h4M16 51.5h7M16 53.5h7M16 55.5h7M16 57.5h7M16 59.5h7M16 61.5h7M16 63.5h7M16 65.5h7M16 67.5h7M16 69.5h7M18 77.5h1M11 79.5h6M41 79.5h1M18 89.5h2M23 89.5h4M47 91.5h2M18 93.5h2M23 93.5h4M47 95.5h2M18 97.5h2M23 97.5h4M47 99.5h2M18 101.5h2M23 101.5h4M47 103.5h2M18 105.5h2M23 105.5h4M47 107.5h2M18 109.5h2M23 109.5h4M47 111.5h2M18 113.5h2M23 113.5h4M47 115.5h2M18 117.5h2M23 117.5h4M47 119.5h2M18 121.5h2M23 121.5h4M47 123.5h2M18 125.5h2M23 125.5h4M47 127.5h2M19 131.5h3M19 133.5h3M19 135.5h3M19 137.5h3M19 139.5h3M19 141.5h3M19 143.5h3M19 145.5h3M19 147.5h3M19 149.5h3M18 203.5h2M23 203.5h4M44 205.5h2M18 207.5h2M23 207.5h4M44 209.5h2M18 211.5h2M23 211.5h4M44 213.5h2M18 215.5h2M23 215.5h4M44 217.5h2M18 219.5h2M23 219.5h4M44 221.5h2M18 223.5h2M23 223.5h4M44 225.5h2M18 227.5h2M23 227.5h4M44 229.5h2M18 231.5h2M23 231.5h4M44 233.5h2M18 235.5h2M23 235.5h4M44 237.5h2M18 239.5h2M23 239.5h4M44 241.5h2M18 243.5h3M18 245.5h3M18 247.5h3M18 249.5h3M18 251.5h3M18 253.5h3M18 255.5h3M18 257.5h3M18 259.5h3M18 261.5h3M22 265.5h2M20 275.5h3M33 275.5h2M20 277.5h3M33 277.5h2M20 279.5h3M33 279.5h2M20 281.5h3M33 281.5h2M20 283.5h3M33 283.5h2M20 285.5h3M33 285.5h2M20 287.5h3M33 287.5h2M20 289.5h3M33 289.5h2M20 291.5h3M33 291.5h2M20 293.5h3M33 293.5h2M12 319.5h4M12 321.5h4M12 323.5h4M12 325.5h4M12 327.5h4M12 329.5h4M12 331.5h4M12 333.5h4M12 335.5h4M12 337.5h4M23 343.5h4M29 343.5h8M27 387.5h4M12 395.5h6M27 395.5h10M12 397.5h6M12 399.5h6M12 403.5h6M12 415.5h6" stroke="#9cdcfe" stroke-opacity=".47" stroke-width="1"/>
<path d="M10 37.5h16M11 77.5h6M12 91.5h6M40 91.5h6M12 95.5h6M40 95.5h6M12 99.5h6M40 99.5h6M12 103.5h6M40 103.5h6M12 107.5h6M40 107.5h6M12 111.5h6M40 111.5h6M12 115.5h6M40 115.5h6M12 119.5h6M40 119.5h6M12 123.5h6M40 123.5h6M12 127.5h6M40 127.5h6M12 205.5h6M37 205.5h6M12 209.5h6M37 209.5h6M12 213.5h6M37 213.5h6M12 217.5h6M37 217.5h6M12 221.5h6M37 221.5h6M12 225.5h6M37 225.5h6M12 229.5h6M37 229.5h6M12 233.5h6M37 233.5h6M12 237.5h6M37 237.5h6M12 241.5h6M37 241.5h6M26 275.5h6M26 277.5h6M26 279.5h6M26 281.5h6M26 283.5h6M26 285.5h6M26 287.5h6M26 289.5h6M26 291.5h6M26 293.5h6" stroke="#4ec9b0" stroke-opacity=".47" stroke-width="1"/>
<path d="M27 37.5h6M15 75.5h10M18 79.5h4M15 87.5h22M31 89.5h15M31 93.5h15M31 97.5h15M31 101.5h15M31 105.5h15M31 109.5h15M31 113.5h15M31 117.5h15M31 121.5h15M31 125.5h15M23 131.5h5M23 133.5h5M23 135.5h5M23 137.5h5M23 139.5h5M23 141.5h5M23 143.5h5M23 145.5h5M23 147.5h5M23 149.5h5M15 201.5h19M31 203.5h12M31 207.5h12M31 211.5h12M31 215.5h12M31 219.5h12M31 223.5h12M31 227.5h12M31 231.5h12M31 235.5h12M31 239.5h12M22 243.5h4M22 245.5h4M22 247.5h4M22 249.5h4M22 251.5h4M22 253.5h4M22 255.5h4M22 257.5h4M22 259.5h4M22 261.5h4M16 265.5h5M21 267.5h7M21 273.5h5M15 311.5h5M19 313.5h5M12 315.5h5M20 319.5h5M20 321.5h5M20 323.5h5M20 325.5h5M20 327.5h5M20 329.5h5M20 331.5h5M20 333.5h5M20 335.5h5M20 337.5h5M12 339.5h5M17 343.5h5M19 345.5h7M12 349.5h7M12 351.5h12M19 357.5h5M24 359.5h6M21 361.5h5M14 365.5h12M14 367.5h5M14 369.5h12M14 371.5h5M12 379.5h12M19 383.5h7M19 385.5h5M19 387.5h7M19 389.5h5M19 391.5h7M32 391.5h7M19 395.5h2M19 397.5h2M19 399.5h2M19 403.5h5M19 405.5h7M15 413.5h4M19 415.5h12" stroke="#dcdcaa" stroke-opacity=".47" stroke-width="1"/>
<path d="M33 37.5h1M36 37.5h1M27 43.5h1M28 43.5h1M32 43.5h1M65 43.5h1M18 49.5h1M21 49.5h1M25 49.5h1M15 51.5h1M23 51.5h1M25 51.5h1M35 51.5h1M15 53.5h1M23 53.5h1M25 53.5h1M35 53.5h1M15 55.5h1M23 55.5h1M25 55.5h1M35 55.5h1M15 57.5h1M23 57.5h1M25 57.5h1M35 57.5h1M15 59.5h1M23 59.5h1M25 59.5h1M35 59.5h1M15 61.5h1M23 61.5h1M25 61.5h1M35 61.5h1M15 63.5h1M23 63.5h1M25 63.5h1M35 63.5h1M15 65.5h1M23 65.5h1M25 65.5h1M35 65.5h1M15 67.5h1M23 67.5h1M25 67.5h1M35 67.5h1M15 69.5h1M23 69.5h1M25 69.5h1M35 69.5h1M10 71.5h1M25 75.5h1M26 75.5h1M28 75.5h1M22 79.5h1M42 79.5h1M10 81.5h1M37 87.5h1M38 87.5h1M40 87.5h1M27 89.5h1M29 89.5h1M46 89.5h1M47 89.5h1M46 91.5h1M49 91.5h1M27 93.5h1M29 93.5h1M46 93.5h1M47 93.5h1M46 95.5h1M49 95.5h1M27 97.5h1M29 97.5h1M46 97.5h1M47 97.5h1M46 99.5h1M49 99.5h1M27 101.5h1M29 101.5h1M46 101.5h1M47 101.5h1M46 103.5h1M49 103.5h1M27 105.5h1M29 105.5h1M46 105.5h1M47 105.5h1M46 107.5h1M49 107.5h1M27 109.5h1M29 109.5h1M46 109.5h1M47 109.5h1M46 111.5h1M49 111.5h1M27 113.5h1M29 113.5h1M46 113.5h1M47 113.5h1M46 115.5h1M49 115.5h1M27 117.5h1M29 117.5h1M46 117.5h1M47 117.5h1M46 119.5h1M49 119.5h1M27 121.5h1M29 121.5h1M46 121.5h1M47 121.5h1M46 123.5h1M49 123.5h1M27 125.5h1M29 125.5h1M46 125.5h1M47 125.5h1M46 127.5h1M49 127.5h1M10 185.5h1M34 201.5h1M35 201.5h1M37 201.5h1M27 203.5h1M29 203.5h1M43 203.5h1M44 203.5h1M43 205.5h1M46 205.5h1M27 207.5h1M29 207.5h1M43 207.5h1M44 207.5h1M43 209.5h1M46 209.5h1M27 211.5h1M29 211.5h1M43 211.5h1M44 211.5h1M43 213.5h1M46 213.5h1M27 215.5h1M29 215.5h1M43 215.5h1M44 215.5h1M43 217.5h1M46 217.5h1M27 219.5h1M29 219.5h1M43 219.5h1M44 219.5h1M43 221.5h1M46 221.5h1M27 223.5h1M29 223.5h1M43 223.5h1M44 223.5h1M43 225.5h1M46 225.5h1M27 227.5h1M29 227.5h1M43 227.5h1M44 227.5h1M43 229.5h1M46 229.5h1M27 231.5h1M29 231.5h1M43 231.5h1M44 231.5h1M43 233.5h1M46 233.5h1M27 235.5h1M29 235.5h1M43 235.5h1M44 235.5h1M43 237.5h1M46 237.5h1M27 239.5h1M29 239.5h1M43 239.5h1M44 239.5h1M43 241.5h1M46 241.5h1M15 265.5h1M21 265.5h1M24 265.5h1M25 265.5h1M27 265.5h1M28 267.5h1M63 267.5h1M12 269.5h1M17 271.5h1M26 273.5h1M49 273.5h1M32 275.5h1M35 275.5h1M32 277.5h1M35 277.5h1M32 279.5h1M35 279.5h1M32 281.5h1M35 281.5h1M32 283.5h1M35 283.5h1M32 285.5h1M35 285.5h1M32 287.5h1M35 287.5h1M32 289.5h1M35 289.5h1M32 291.5h1M35 291.5h1M32 293.5h1M35 293.5h1M12 295.5h1M10 297.5h1M20 311.5h1M21 311.5h1M23 311.5h1M24 313.5h1M31 313.5h1M17 315.5h1M21 315.5h1M16 319.5h1M18 319.5h1M25 319.5h1M26 319.5h1M16 321.5h1M18 321.5h1M25 321.5h1M26 321.5h1M16 323.5h1M18 323.5h1M25 323.5h1M26 323.5h1M16 325.5h1M18 325.5h1M25 325.5h1M26 325.5h1M16 327.5h1M18 327.5h1M25 327.5h1M26 327.5h1M16 329.5h1M18 329.5h1M25 329.5h1M26 329.5h1M16 331.5h1M18 331.5h1M25 331.5h1M26 331.5h1M16 333.5h1M18 333.5h1M25 333.5h1M26 333.5h1M16 335.5h1M18 335.5h1M25 335.5h1M26 335.5h1M16 337.5h1M18 337.5h1M25 337.5h1M26 337.5h1M17 339.5h1M21 339.5h1M22 343.5h1M37 343.5h1M26 345.5h1M29 345.5h1M19 349.5h1M37 349.5h1M24 351.5h1M41 351.5h1M24 357.5h1M37 357.5h1M18 359.5h1M30 359.5h1M31 359.5h1M48 359.5h1M50 359.5h1M26 361.5h1M30 361.5h1M26 365.5h1M42 365.5h1M19 367.5h1M23 367.5h1M26 369.5h1M43 369.5h1M19 371.5h1M23 371.5h1M12 375.5h1M24 379.5h1M41 379.5h1M26 383.5h1M29 383.5h1M24 385.5h1M55 385.5h1M26 387.5h1M31 387.5h1M24 389.5h1M39 389.5h1M26 391.5h1M39 391.5h1M40 391.5h1M41 391.5h1M21 395.5h1M37 395.5h1M21 397.5h1M65 397.5h1M21 399.5h1M58 399.5h1M24 403.5h1M25 403.5h1M26 405.5h1M48 405.5h1M10 407.5h1M19 413.5h1M20 413.5h1M22 413.5h1M31 415.5h1M32 415.5h1M10 417.5h1" stroke="#ffd700" stroke-opacity=".47" stroke-width="1"/>
<path d="M34 37.5h2M33 43.5h1M36 43.5h1M39 43.5h2M43 43.5h2M47 43.5h2M51 43.5h2M55 43.5h1M58 43.5h1M61 43.5h1M64 43.5h1M19 49.5h2M24 51.5h1M24 53.5h1M24 55.5h1M24 57.5h1M24 59.5h1M24 61.5h1M24 63.5h1M24 65.5h1M24 67.5h1M24 69.5h1M23 79.5h3M28 89.5h1M28 93.5h1M28 97.5h1M28 101.5h1M28 105.5h1M28 109.5h1M28 113.5h1M28 117.5h1M28 121.5h1M28 125.5h1M28 203.5h1M28 207.5h1M28 211.5h1M28 215.5h1M28 219.5h1M28 223.5h1M28 227.5h1M28 231.5h1M28 235.5h1M28 239.5h1M25 313.5h6M18 315.5h3M17 319.5h1M17 321.5h1M17 323.5h1M17 325.5h1M17 327.5h1M17 329.5h1M17 331.5h1M17 333.5h1M17 335.5h1M17 337.5h1M18 339.5h3M20 367.5h3M20 371.5h3" stroke="#b5cea8" stroke-opacity=".47" stroke-width="1"/>
</g><use href="#mmg" transform="translate(0,1)" opacity=".28"/>
</svg><div class="abs" style="left:90px;top:0;width:12px;height:222px;background:rgba(121,121,121,.13)"></div><div class="abs" style="left:90px;top:219px;width:12px;height:3px;background:#8a8a8a"></div><div class="abs" style="left:89px;top:0;width:1px;height:602px;background:#2c2c2c"></div></div>
<div id="status"><div class="r"></div><div class="rm"></div>
<svg style="left:12.5px;top:5px" width="11" height="11" viewBox="0 0 11 11" fill="none" stroke="#fff" stroke-width="1.2"><path d="M.6 4.4 4.4 7.6.6 10.8M10.4.2 6.200 3.700l4.200 3.400"/></svg>
<svg style="left:45.5px;top:4.5px" width="11" height="13" viewBox="0 0 11 13"><path d="M5.5.7C4 1.7 2.4 2.2.7 2.2v4.3c0 2.7 1.9 4.8 4.8 5.8 2.9-1 4.8-3.1 4.8-5.8V2.2C8.6 2.2 7 1.7 5.5.7z" fill="none" stroke="#fff" stroke-width="1.1"/><circle cx="5.5" cy="5.2" r="1.3" fill="#fff"/><rect x="4.9" y="5.8" width="1.2" height="2.6" fill="#fff"/></svg>
<svg style="left:166px;top:4.5px" width="13" height="13" viewBox="0 0 13 13" fill="none" stroke="#fff" stroke-width="1.1"><circle cx="6.5" cy="6.5" r="5.8"/><path d="M4.2 4.2l4.6 4.6M8.8 4.2l-4.6 4.6"/></svg>
<svg style="left:193.5px;top:4.5px" width="13" height="13" viewBox="0 0 13 13" fill="none" stroke="#fff" stroke-width="1.1"><path d="M6.5 1 12.3 12H.7z"/><path d="M6.5 4.8v3.8M6.5 9.6v1.2"/></svg>
<svg style="left:234px;top:4.5px" width="12" height="13" viewBox="0 0 12 13" fill="none" stroke="#fff" stroke-width="1"><circle cx="6" cy="4.5" r="1.2"/><path d="M6 5.7 3.5 12.5M6 5.7 8.5 12.5M4.4 10h3.2M3.3 2a3.6 3.6 0 0 0 0 5M8.7 2a3.6 3.6 0 0 1 0 5M1.5.7a5.6 5.6 0 0 0 0 7.6M10.5.7a5.6 5.6 0 0 1 0 7.6"/></svg>
<svg style="left:581px;top:6px" width="14" height="9" viewBox="0 0 14 9" fill="none" stroke="#fff" stroke-width="1.4"><path d="M.5 5 3.3 8 9 .8M5.5 6.5 6.8 8 12.5.8"/></svg>
<svg style="left:654.5px;top:4px" width="12" height="14" viewBox="0 0 12 14" fill="none" stroke="#fff" stroke-width="1.1"><path d="M6 1a3.8 3.8 0 0 0-3.8 3.8v3.7L.8 10.5h10.4L9.8 8.5V4.8A3.8 3.8 0 0 0 6 1zM4.5 12.5a1.5 1.5 0 0 0 3 0"/></svg>
</div>
<span class="tx" style="left:294.00px;top:10.74px;font-size:12.00px;color:#c5c5c5;letter-spacing:-0.706px;">Search</span>
<span class="tx" style="left:32.00px;top:41.24px;font-size:12.00px;color:#fff;letter-spacing:-0.021px;">Restricted Mode is intended for safe code browsing. Trust this window to enable all feat...</span>
<span class="tx" style="left:520.00px;top:41.24px;font-size:12.00px;color:#fff;letter-spacing:0.125px;text-decoration:underline;">Manage</span>
<span class="tx" style="left:581.00px;top:41.24px;font-size:12.00px;color:#fff;letter-spacing:-0.042px;text-decoration:underline;">Learn More</span>
<span class="tx" style="left:80.50px;top:71.40px;font-size:13.00px;color:#fff;letter-spacing:0.040px;">Untitled-1</span>
<span class="tx" style="left:200.40px;top:71.40px;font-size:13.00px;color:#9d9d9d;letter-spacing:-0.038px;">const char MAIN_page[] PROGMEM = R"=====</span>
<span class="tx" style="left:484.00px;top:72.04px;font-size:12.00px;color:#7f7f7f;letter-spacing:0.182px;">Untitled-2</span>
<span class="tx" style="left:61.00px;top:702.04px;font-size:12.00px;color:#fff;letter-spacing:-0.062px;">Restricted Mode</span>
<span class="tx" style="left:184.00px;top:702.04px;font-size:12.00px;color:#fff;">0</span>
<span class="tx" style="left:210.00px;top:702.04px;font-size:12.00px;color:#fff;">0</span>
<span class="tx" style="left:250.00px;top:702.04px;font-size:12.00px;color:#fff;">0</span>
<span class="tx" style="left:387.50px;top:702.04px;font-size:12.00px;color:#fff;letter-spacing:-0.609px;">Spaces: 2</span>
<span class="tx" style="left:453.00px;top:702.04px;font-size:12.00px;color:#fff;letter-spacing:-1.000px;">UTF-8</span>
<span class="tx" style="left:500.00px;top:702.04px;font-size:12.00px;color:#fff;letter-spacing:-1.781px;">CRLF</span>
<span class="tx" style="left:542.00px;top:702.04px;font-size:12.00px;color:#fff;letter-spacing:-0.094px;">C++</span>
<span class="tx" style="left:599.50px;top:702.04px;font-size:12.00px;color:#fff;letter-spacing:-0.170px;">Prettier</span>
<span class="tx" style="left:28.2px;top:85.5px;font-size:9.5px;font-weight:bold;color:#fff">2</span>
</div>
<div id="br">
<div id="btabs"></div>
<div id="btool"></div>
<div id="atab"></div>
<div class="tsep" style="left:91.5px"></div><div class="tsep" style="left:178.5px"></div><div class="tsep" style="left:265.5px"></div>
<!-- arduino-ish icon -->
<div class="abs" style="left:18px;top:10px;width:16px;height:16px;border-radius:3px;background:#e9893a"></div>
<svg style="left:20px;top:13px" width="12" height="11" viewBox="0 0 12 11" fill="none" stroke="#fff" stroke-width="1.4"><path d="M1 0v6h10V0M4.3 1.5V6M7.7 1.5V6M.5 9.8h11"/></svg>
<!-- youtube -->
<svg style="left:105px;top:12.5px" width="16" height="11.5" viewBox="0 0 16 11.5"><rect width="16" height="11.5" rx="3.2" fill="#f00"/><path d="M6.4 3.2v5.1L10.8 5.75z" fill="#fff"/></svg>
<!-- globe -->
<svg style="left:193px;top:11px" width="14" height="14" viewBox="0 0 14 14"><circle cx="7" cy="7" r="7" fill="#9a9aa2"/><path d="M3.2 2.2c1.5.3 2.8 1.3 3 2.5.2 1.2-1.2 1.7-2 2.5S3.5 9 2.4 8.5C1.3 8 .9 6.5 1 5.3c.1-1.3.9-2.4 2.2-3.1zM8.2 6.5c1-.5 2.6-.3 3.6.5.6.5 1 1.2.8 2-.4 1.3-1.6 2.6-3 3-1 .3-.9-1-1.2-1.8-.3-.7-1.2-1.2-1.2-2 0-.7.4-1.4 1-1.7zM8 1.2c1.3-.1 2.7.6 3.5 1.7-.7.3-1.7.4-2.4 0-.5-.3-1-1-.1-1.7z" fill="#1b1b20"/></svg>
<!-- dark horse-ish favicon -->
<svg style="left:280px;top:11px" width="14" height="15" viewBox="0 0 14 15"><path d="M4 1.5c1.5-.8 3-.2 4 .8 1.5.2 3 1.2 3.8 2.6-.9-.3-1.6-.2-2.2.2 1 1 1.5 2.4 1.2 4-.5-.9-1.2-1.4-2-1.5.2 1.8-.5 3.5-2 4.6.2-1.2-.1-2.2-.8-3-1 .7-2.3 1-3.6.6C3.5 9 4.3 8 4.5 6.8 3.5 6.6 2.5 6 2 5c1 .1 1.8-.1 2.4-.7C3.8 3.3 3.7 2.3 4 1.5z" fill="#050507"/></svg>
<!-- active tab globe -->
<svg style="left:366px;top:11px" width="14" height="14" viewBox="0 0 14 14"><circle cx="7" cy="7" r="7" fill="#a0a0a8"/><path d="M3.2 2.2c1.5.3 2.8 1.3 3 2.5.2 1.2-1.2 1.7-2 2.5S3.5 9 2.4 8.5C1.3 8 .9 6.5 1 5.3c.1-1.3.9-2.4 2.2-3.1zM8.2 6.5c1-.5 2.6-.3 3.6.5.6.5 1 1.2.8 2-.4 1.3-1.6 2.6-3 3-1 .3-.9-1-1.2-1.8-.3-.7-1.2-1.2-1.2-2 0-.7.4-1.4 1-1.7zM8 1.2c1.3-.1 2.7.6 3.5 1.7-.7.3-1.7.4-2.4 0-.5-.3-1-1-.1-1.7z" fill="#2c2c33"/></svg>
<svg style="left:415px;top:14px" width="8" height="8" viewBox="0 0 8 8" fill="none" stroke="#fff" stroke-width="1.4"><path d="M.5.5l7 7M7.5.5l-7 7"/></svg>
<svg style="left:450.5px;top:13px" width="11" height="11" viewBox="0 0 11 11" fill="none" stroke="#e4e4e8" stroke-width="1.3"><path d="M5.5 0v11M0 5.5h11"/></svg>
<svg style="left:521px;top:15px" width="10" height="6" viewBox="0 0 10 6" fill="none" stroke="#e4e4e8" stroke-width="1.3"><path d="M.5.5 5 5 9.5.5"/></svg>
<div class="abs" style="left:561px;top:17.5px;width:10px;height:1.3px;background:#fff"></div>
<div class="abs" style="left:607.5px;top:14px;width:9.5px;height:9.5px;border:1.3px solid #fff;border-radius:1.5px"></div>
<svg style="left:653px;top:13px" width="10" height="10" viewBox="0 0 10 10" fill="none" stroke="#fff" stroke-width="1.2"><path d="M.5.5l9 9M9.5.5l-9 9"/></svg>
<!-- toolbar -->
<svg style="left:18px;top:51px" width="8" height="14" viewBox="0 0 8 14" fill="none" stroke="#c8c8ce" stroke-width="1.5"><path d="M7.2.7.9 7l6.3 6.3"/></svg>
<svg style="left:47.5px;top:51px" width="8" height="14" viewBox="0 0 8 14" fill="none" stroke="#55555c" stroke-width="1.5"><path d="M.8.7 7.1 7 .8 13.3"/></svg>
<svg style="left:74px;top:50.5px" width="16" height="15" viewBox="0 0 16 15" fill="none" stroke="#c8c8ce" stroke-width="1.5"><path d="M13.4 8.6A6 6 0 1 1 11.3 3.1"/><path d="M9.6.9l3.9 2.1-2.800 2.800z" fill="#c8c8ce" stroke-width=".8" stroke-linejoin="round"/></svg>
<svg style="left:106px;top:50.3px" width="12" height="15" viewBox="0 0 12 15" fill="none" stroke="#c8c8ce" stroke-width="1.4"><path d="M1 2.2A1.5 1.5 0 0 1 2.5.7h7A1.5 1.5 0 0 1 11 2.2v11.6L6 10.3 1 13.8z"/></svg>
<div id="addr"></div>
<svg style="left:144.5px;top:52px" width="13" height="12" viewBox="0 0 13 12"><path d="M6.5.3 12.9 11.7H.1z" fill="#fff" stroke="#fff" stroke-width=".6" stroke-linejoin="round"/><rect x="5.85" y="4" width="1.3" height="4" fill="#0d0d12"/><rect x="5.85" y="8.9" width="1.3" height="1.3" fill="#0d0d12"/></svg>
<svg style="left:259px;top:50.5px" width="15" height="15" viewBox="0 0 15 15" fill="none" stroke="#c8c8ce" stroke-width="1.4"><circle cx="6" cy="6" r="5.2"/><path d="M3.6 6h4.8M9.8 9.8l4.5 4.5"/></svg>
<svg style="left:292.5px;top:50.5px" width="15" height="15" viewBox="0 0 15 15" fill="none" stroke="#c8c8ce" stroke-width="1.4"><path d="M4.5 6H2.2A1.5 1.5 0 0 0 .7 7.5v5.3a1.5 1.5 0 0 0 1.5 1.5h8a1.5 1.5 0 0 0 1.5-1.5v-2"/><path d="M4.5 10.5C5 7 7.5 4.8 11 4.6V1.2L14.5 5 11 8.6V6.3"/></svg>
<div class="abs" style="left:315.7px;top:50px;width:1px;height:16px;background:#c8c8ce"></div>
<!-- brave lion -->
<svg style="left:327.8px;top:48.5px" width="15" height="18.5" viewBox="0 0 15 17" preserveAspectRatio="none"><path d="M12.3 2.3 10.9.8H4.1L2.7 2.3 1.5 2 .3 3.8l.6 1.7-.4 1.3 1.6 6 1.7 2 3.7 2.2 3.7-2.2 1.7-2 1.6-6-.4-1.3.6-1.7L13.5 2z" fill="#fb542b"/><path d="M7.5 4.2 5 3.8 3 5.2l1 2.6L6 9.2l-.8 1.6 2.3 1.5 2.3-1.5L9 9.2l2-1.4 1-2.6-2-1.4z" fill="#fff"/><path d="M5.6 6.6l1.9.7 1.9-.7M7.5 7.3v2.3M6.3 10.5l1.2.7 1.2-.7" fill="none" stroke="#fb542b" stroke-width=".7"/></svg>
<div class="abs" style="left:338.3px;top:46px;width:11.6px;height:11.6px;border-radius:50%;background:#73737e"></div>
<span class="tx" style="left:341.8px;top:47.8px;font-size:8px;font-weight:bold;color:#fff">2</span>
<svg style="left:359.5px;top:53px" width="14" height="12" viewBox="0 0 14 12"><path d="M7 0 0 12h14z" fill="#ff4724"/><path d="M7 0 3.5 6 7 8z" fill="#ff4724"/><path d="M7 8 3.5 6 0 12z" fill="#9e1f63"/><path d="M7 8l7 4H0z" fill="#662d91"/><path d="M7 4.5 4.8 8.3h4.4z" fill="#fff"/></svg>
<div class="abs" style="left:368px;top:42px;width:12px;height:32px;background:#1b1b20"></div>
<svg style="left:382.5px;top:50.5px" width="16" height="16" viewBox="0 0 17 16" fill="none" stroke="#bcbcc4" stroke-width="1.4"><path d="M6.2 2.8a1.9 1.9 0 1 1 3.6 0h3a1 1 0 0 1 1 1v2.7a1.9 1.9 0 1 1 0 3.6v3a1 1 0 0 1-1 1H9.9a1.9 1.9 0 1 0-3.7 0H3.2a1 1 0 0 1-1-1v-3a1.9 1.9 0 1 0 0-3.6V3.8a1 1 0 0 1 1-1z"/></svg>
<svg style="left:414px;top:51px" width="14" height="15" viewBox="0 0 14 15" fill="none" stroke="#c8c8ce" stroke-width="1.4"><path d="M7 .5v9.5M2.8 6 7 10.2 11.2 6M.7 10.5v2.3a1.2 1.2 0 0 0 1.2 1.2h10.2a1.2 1.2 0 0 0 1.2-1.2v-2.3"/></svg>
<svg style="left:444px;top:51px" width="15" height="14" viewBox="0 0 15 14"><rect x=".7" y=".7" width="13.6" height="12.6" rx="1.5" fill="none" stroke="#c8c8ce" stroke-width="1.4"/><rect x="8.2" y="1" width="6" height="12" fill="#c8c8ce"/></svg>
<svg style="left:473px;top:51.5px" width="16" height="14" viewBox="0 0 16 14" fill="none" stroke="#c8c8ce" stroke-width="1.4"><path d="M.7 3v8.8a1.5 1.5 0 0 0 1.5 1.5h11.6a1.5 1.5 0 0 0 1.5-1.5V5.2a1.5 1.5 0 0 0-1.5-1.5H2.2A1.5 1.5 0 0 1 2.2.7h10.5"/><rect x="9.5" y="6.5" width="5.8" height="3.8" rx="1"/></svg>
<svg style="left:504px;top:50.5px" width="16" height="16" viewBox="0 0 16 16" fill="none" stroke="#c8c8ce" stroke-width="1.4" stroke-linejoin="round"><path d="M7 .8C7.6 4.5 9.5 6.4 13.2 7 9.5 7.6 7.6 9.5 7 13.2 6.4 9.5 4.5 7.6.8 7 4.5 6.4 6.4 4.5 7 .8z"/><path d="M12.8 10.8c.2 1.2.8 1.8 2 2-1.2.2-1.8.8-2 2-.2-1.2-.8-1.8-2-2 1.2-.2 1.8-.8 2-2z" fill="#c8c8ce" stroke-width=".6"/></svg>
<div id="vpn"></div>
<div class="abs" style="left:535px;top:53px;width:10px;height:10px;border-radius:50%;background:#a9a9b4"></div>
<div class="abs" style="left:537px;top:57.2px;width:6px;height:1.6px;background:#1b1b20"></div>
<div id="upd"></div>
<div class="abs" style="left:651px;top:52.5px;width:15px;height:1.6px;background:#4fd164;border-radius:1px;box-shadow:0 5px #4fd164,0 10px #4fd164"></div>
<!-- bookmarks -->
<div class="abs" style="left:12px;top:85px;width:16px;height:16px;background:#fff;border-radius:1px"></div>
<svg style="left:12px;top:85px" width="16" height="16" viewBox="0 0 16 16"><path d="M4 1.5h4.5L6 5.5z" fill="#e5533c"/><path d="M8.5 1.5H12L8 8 5.8 5.8z" fill="#1a1a1a"/><path d="M8 8l4-2.5V10z" fill="#f2b632"/><path d="M8 8l4 3.5-3 3-3.5-3z" fill="#2a9d8f"/><path d="M4.5 10.5 8 8l-2.5 6.5H4z" fill="#1a1a1a"/></svg>
<svg style="left:166px;top:87.5px" width="16" height="11.5" viewBox="0 0 16 11.5"><rect width="16" height="11.5" rx="3.2" fill="#f00"/><path d="M6.4 3.2v5.1L10.8 5.75z" fill="#fff"/></svg>
<svg style="left:321px;top:86px" width="14" height="14" viewBox="0 0 14 14"><circle cx="7" cy="7" r="7" fill="#9a9aa2"/><path d="M3.2 2.2c1.5.3 2.8 1.3 3 2.5.2 1.2-1.2 1.7-2 2.5S3.5 9 2.4 8.5C1.3 8 .9 6.5 1 5.3c.1-1.3.9-2.4 2.2-3.1zM8.2 6.5c1-.5 2.6-.3 3.6.5.6.5 1 1.2.8 2-.4 1.3-1.6 2.6-3 3-1 .3-.9-1-1.2-1.8-.3-.7-1.2-1.2-1.2-2 0-.7.4-1.4 1-1.7zM8 1.2c1.3-.1 2.7.6 3.5 1.7-.7.3-1.7.4-2.4 0-.5-.3-1-1-.1-1.7z" fill="#1b1b20"/></svg>
<svg style="left:502.5px;top:88px" width="11" height="9" viewBox="0 0 11 9" fill="none" stroke="#b0b0b8" stroke-width="1.3"><path d="M.7.7 4.5 4.5.7 8.3M6 .7l3.8 3.8L6 8.3"/></svg>
<div class="abs" style="left:531px;top:85px;width:1px;height:16px;background:#0a0a0d"></div>
<svg style="left:546px;top:86px" width="16" height="13" viewBox="0 0 16 13"><path d="M0 1.5A1.5 1.5 0 0 1 1.5 0h4l1.5 2h7.5A1.5 1.5 0 0 1 16 3.5v8a1.5 1.5 0 0 1-1.5 1.5h-13A1.5 1.5 0 0 1 0 11.5z" fill="#e8b93a"/><path d="M0 4.5A1.5 1.5 0 0 1 1.5 3h13A1.5 1.5 0 0 1 16 4.5v7a1.5 1.5 0 0 1-1.5 1.5h-13A1.5 1.5 0 0 1 0 11.5z" fill="#fad65a"/></svg>

<span class="tx" style="left:42.00px;top:12.24px;font-size:12.00px;color:#d0d0d4;width:40px;overflow:hidden;-webkit-mask-image:linear-gradient(90deg,#000 60%,transparent 100%);">Arduino</span>
<span class="tx" style="left:129.00px;top:12.24px;font-size:12.00px;color:#d0d0d4;width:40px;overflow:hidden;-webkit-mask-image:linear-gradient(90deg,#000 60%,transparent 100%);">(53) Ard</span>
<span class="tx" style="left:216.00px;top:12.24px;font-size:12.00px;color:#d0d0d4;width:39px;overflow:hidden;-webkit-mask-image:linear-gradient(90deg,#000 60%,transparent 100%);">Monitor</span>
<span class="tx" style="left:303.00px;top:12.24px;font-size:12.00px;color:#d0d0d4;width:39px;overflow:hidden;-webkit-mask-image:linear-gradient(90deg,#000 60%,transparent 100%);">Usando</span>
<span class="tx" style="left:389.00px;top:12.24px;font-size:12.00px;color:#fff;width:15px;overflow:hidden;-webkit-mask-image:linear-gradient(90deg,#000 40%,transparent 100%);">Mo</span>
<span class="tx" style="left:164.00px;top:51.15px;font-size:14.00px;color:#fff;letter-spacing:-0.137px;">No seguro</span>
<span class="tx" style="left:549.50px;top:51.92px;font-size:12.50px;color:#fff;letter-spacing:-1.352px;">VPN</span>
<span class="tx" style="left:595.00px;top:51.50px;font-size:13.00px;color:#4fd164;letter-spacing:-0.675px;">Actualizar</span>
<span class="tx" style="left:34.00px;top:86.92px;font-size:12.50px;color:#fff;letter-spacing:-0.230px;">Motor en AutoCAD...</span>
<span class="tx" style="left:188.00px;top:86.92px;font-size:12.50px;color:#fff;letter-spacing:-0.440px;">(208) Cómo crear u...</span>
<span class="tx" style="left:342.00px;top:86.92px;font-size:12.50px;color:#fff;letter-spacing:-0.266px;">Implementación de...</span>
<span class="tx" style="left:568.00px;top:86.92px;font-size:12.50px;color:#fff;letter-spacing:-0.252px;">Todos los favoritos</span>
<div id="page">
<div id="phead"></div>
<span class="tx" style="left:194.20px;top:29.35px;font-size:21.20px;color:#fff;letter-spacing:0.058px;font-weight:bold;">Sistema de Monitoreo S.C.I</span>
<div class="card" style="left:29.0px;top:101.0px"><span class="tx" style="left:0.00px;top:20.53px;font-size:15.80px;color:#fff;font-weight:bold;width:286.5px;text-align:center;">Zona 1</span>
<div class="row tp"><svg style="left:41.4px;top:20.2px" width="8.3" height="16.3" viewBox="0 0 256 512"><path fill="#fff" stroke="#fff" stroke-width="24" d="M192 384c0 35.346-28.654 64-64 64s-64-28.654-64-64c0-23.685 12.876-44.349 32-55.417V224c0-17.673 14.327-32 32-32s32 14.327 32 32v104.583c19.124 11.068 32 31.732 32 55.417zm32-84.653c19.912 22.563 32 52.194 32 84.653 0 70.696-57.303 128-128 128-.299 0-.609-.001-.909-.003C56.789 511.509-.357 453.636.002 383.333.166 351.135 12.225 321.755 32 299.347V96c0-53.019 42.981-96 96-96s96 42.981 96 96v203.347zM208 384c0-34.339-19.37-52.19-32-66.502V96c0-26.467-21.533-48-48-48S80 69.533 80 96v221.498c-12.732 14.428-31.825 32.1-31.999 66.08-.224 43.876 35.563 80.116 79.423 80.42L128 464c44.112 0 80-35.888 80-80z"/></svg><span class="tx" style="left:0.00px;top:18.34px;font-size:17.50px;color:#fff;font-family:'Liberation Serif',serif;width:269.5px;text-align:center;">0</span><span class="tx" style="left:219.80px;top:22.59px;font-size:12.30px;color:#fff;">°C</span></div>
<div class="row hm"><svg style="left:41.4px;top:19.9px" width="11" height="16" viewBox="0 0 352 512"><path fill="#fff" d="M205.22 22.09c-7.94-28.78-49.44-30.12-58.44 0C100.01 179.85 0 222.72 0 333.91 0 432.35 78.72 512 176 512s176-79.65 176-178.09c0-111.75-99.79-153.34-146.78-311.82zM176 448c-61.75 0-112-50.25-112-112 0-8.84 7.16-16 16-16s16 7.16 16 16c0 44.11 35.89 80 80 80 8.84 0 16 7.16 16 16s-7.16 16-16 16z"/></svg><span class="tx" style="left:0.00px;top:18.34px;font-size:17.50px;color:#fff;font-family:'Liberation Serif',serif;width:275.5px;text-align:center;">0</span><span class="tx" style="left:222.90px;top:22.59px;font-size:12.30px;color:#fff;">%</span></div>
</div>
<div class="card" style="left:348.0px;top:101.0px"><span class="tx" style="left:0.00px;top:20.53px;font-size:15.80px;color:#fff;font-weight:bold;width:286.5px;text-align:center;">Zona 2</span>
<div class="row tp"><svg style="left:41.4px;top:20.2px" width="8.3" height="16.3" viewBox="0 0 256 512"><path fill="#fff" stroke="#fff" stroke-width="24" d="M192 384c0 35.346-28.654 64-64 64s-64-28.654-64-64c0-23.685 12.876-44.349 32-55.417V224c0-17.673 14.327-32 32-32s32 14.327 32 32v104.583c19.124 11.068 32 31.732 32 55.417zm32-84.653c19.912 22.563 32 52.194 32 84.653 0 70.696-57.303 128-128 128-.299 0-.609-.001-.909-.003C56.789 511.509-.357 453.636.002 383.333.166 351.135 12.225 321.755 32 299.347V96c0-53.019 42.981-96 96-96s96 42.981 96 96v203.347zM208 384c0-34.339-19.37-52.19-32-66.502V96c0-26.467-21.533-48-48-48S80 69.533 80 96v221.498c-12.732 14.428-31.825 32.1-31.999 66.08-.224 43.876 35.563 80.116 79.423 80.42L128 464c44.112 0 80-35.888 80-80z"/></svg><span class="tx" style="left:0.00px;top:18.34px;font-size:17.50px;color:#fff;font-family:'Liberation Serif',serif;width:269.5px;text-align:center;">0</span><span class="tx" style="left:219.80px;top:22.59px;font-size:12.30px;color:#fff;">°C</span></div>
<div class="row hm"><svg style="left:41.4px;top:19.9px" width="11" height="16" viewBox="0 0 352 512"><path fill="#fff" d="M205.22 22.09c-7.94-28.78-49.44-30.12-58.44 0C100.01 179.85 0 222.72 0 333.91 0 432.35 78.72 512 176 512s176-79.65 176-178.09c0-111.75-99.79-153.34-146.78-311.82zM176 448c-61.75 0-112-50.25-112-112 0-8.84 7.16-16 16-16s16 7.16 16 16c0 44.11 35.89 80 80 80 8.84 0 16 7.16 16 16s-7.16 16-16 16z"/></svg><span class="tx" style="left:0.00px;top:18.34px;font-size:17.50px;color:#fff;font-family:'Liberation Serif',serif;width:275.5px;text-align:center;">0</span><span class="tx" style="left:222.90px;top:22.59px;font-size:12.30px;color:#fff;">%</span></div>
</div>
<div class="card" style="left:29.0px;top:299.5px"><span class="tx" style="left:0.00px;top:21.23px;font-size:15.80px;color:#fff;font-weight:bold;width:286.5px;text-align:center;">Zona 3</span>
<div class="row tp"><svg style="left:41.4px;top:20.2px" width="8.3" height="16.3" viewBox="0 0 256 512"><path fill="#fff" stroke="#fff" stroke-width="24" d="M192 384c0 35.346-28.654 64-64 64s-64-28.654-64-64c0-23.685 12.876-44.349 32-55.417V224c0-17.673 14.327-32 32-32s32 14.327 32 32v104.583c19.124 11.068 32 31.732 32 55.417zm32-84.653c19.912 22.563 32 52.194 32 84.653 0 70.696-57.303 128-128 128-.299 0-.609-.001-.909-.003C56.789 511.509-.357 453.636.002 383.333.166 351.135 12.225 321.755 32 299.347V96c0-53.019 42.981-96 96-96s96 42.981 96 96v203.347zM208 384c0-34.339-19.37-52.19-32-66.502V96c0-26.467-21.533-48-48-48S80 69.533 80 96v221.498c-12.732 14.428-31.825 32.1-31.999 66.08-.224 43.876 35.563 80.116 79.423 80.42L128 464c44.112 0 80-35.888 80-80z"/></svg><span class="tx" style="left:0.00px;top:18.34px;font-size:17.50px;color:#fff;font-family:'Liberation Serif',serif;width:269.5px;text-align:center;">0</span><span class="tx" style="left:219.80px;top:22.59px;font-size:12.30px;color:#fff;">°C</span></div>
<div class="row hm" style="top:113px"><svg style="left:41.4px;top:19.9px" width="11" height="16" viewBox="0 0 352 512"><path fill="#fff" d="M205.22 22.09c-7.94-28.78-49.44-30.12-58.44 0C100.01 179.85 0 222.72 0 333.91 0 432.35 78.72 512 176 512s176-79.65 176-178.09c0-111.75-99.79-153.34-146.78-311.82zM176 448c-61.75 0-112-50.25-112-112 0-8.84 7.16-16 16-16s16 7.16 16 16c0 44.11 35.89 80 80 80 8.84 0 16 7.16 16 16s-7.16 16-16 16z"/></svg><span class="tx" style="left:0.00px;top:18.34px;font-size:17.50px;color:#fff;font-family:'Liberation Serif',serif;width:275.5px;text-align:center;">0</span><span class="tx" style="left:222.90px;top:22.59px;font-size:12.30px;color:#fff;">%</span></div>
</div>
<div class="card" style="left:348.0px;top:299.5px"><span class="tx" style="left:0.00px;top:21.23px;font-size:15.80px;color:#fff;font-weight:bold;width:286.5px;text-align:center;">Zona 4</span>
<div class="row tp"><svg style="left:41.4px;top:20.2px" width="8.3" height="16.3" viewBox="0 0 256 512"><path fill="#fff" stroke="#fff" stroke-width="24" d="M192 384c0 35.346-28.654 64-64 64s-64-28.654-64-64c0-23.685 12.876-44.349 32-55.417V224c0-17.673 14.327-32 32-32s32 14.327 32 32v104.583c19.124 11.068 32 31.732 32 55.417zm32-84.653c19.912 22.563 32 52.194 32 84.653 0 70.696-57.303 128-128 128-.299 0-.609-.001-.909-.003C56.789 511.509-.357 453.636.002 383.333.166 351.135 12.225 321.755 32 299.347V96c0-53.019 42.981-96 96-96s96 42.981 96 96v203.347zM208 384c0-34.339-19.37-52.19-32-66.502V96c0-26.467-21.533-48-48-48S80 69.533 80 96v221.498c-12.732 14.428-31.825 32.1-31.999 66.08-.224 43.876 35.563 80.116 79.423 80.42L128 464c44.112 0 80-35.888 80-80z"/></svg><span class="tx" style="left:0.00px;top:18.34px;font-size:17.50px;color:#fff;font-family:'Liberation Serif',serif;width:269.5px;text-align:center;">0</span><span class="tx" style="left:219.80px;top:22.59px;font-size:12.30px;color:#fff;">°C</span></div>
<div class="row hm" style="top:113px"><svg style="left:41.4px;top:19.9px" width="11" height="16" viewBox="0 0 352 512"><path fill="#fff" d="M205.22 22.09c-7.94-28.78-49.44-30.12-58.44 0C100.01 179.85 0 222.72 0 333.91 0 432.35 78.72 512 176 512s176-79.65 176-178.09c0-111.75-99.79-153.34-146.78-311.82zM176 448c-61.75 0-112-50.25-112-112 0-8.84 7.16-16 16-16s16 7.16 16 16c0 44.11 35.89 80 80 80 8.84 0 16 7.16 16 16s-7.16 16-16 16z"/></svg><span class="tx" style="left:0.00px;top:18.34px;font-size:17.50px;color:#fff;font-family:'Liberation Serif',serif;width:275.5px;text-align:center;">0</span><span class="tx" style="left:222.90px;top:22.59px;font-size:12.30px;color:#fff;">%</span></div>
</div>
<div class="card" style="left:29.0px;top:498.0px"><span class="tx" style="left:0.00px;top:20.53px;font-size:15.80px;color:#fff;font-weight:bold;width:286.5px;text-align:center;">Zona 5</span>
<div class="row tp"><svg style="left:41.4px;top:20.2px" width="8.3" height="16.3" viewBox="0 0 256 512"><path fill="#fff" stroke="#fff" stroke-width="24" d="M192 384c0 35.346-28.654 64-64 64s-64-28.654-64-64c0-23.685 12.876-44.349 32-55.417V224c0-17.673 14.327-32 32-32s32 14.327 32 32v104.583c19.124 11.068 32 31.732 32 55.417zm32-84.653c19.912 22.563 32 52.194 32 84.653 0 70.696-57.303 128-128 128-.299 0-.609-.001-.909-.003C56.789 511.509-.357 453.636.002 383.333.166 351.135 12.225 321.755 32 299.347V96c0-53.019 42.981-96 96-96s96 42.981 96 96v203.347zM208 384c0-34.339-19.37-52.19-32-66.502V96c0-26.467-21.533-48-48-48S80 69.533 80 96v221.498c-12.732 14.428-31.825 32.1-31.999 66.08-.224 43.876 35.563 80.116 79.423 80.42L128 464c44.112 0 80-35.888 80-80z"/></svg><span class="tx" style="left:0.00px;top:18.34px;font-size:17.50px;color:#fff;font-family:'Liberation Serif',serif;width:269.5px;text-align:center;">0</span><span class="tx" style="left:219.80px;top:22.59px;font-size:12.30px;color:#fff;">°C</span></div>
<div class="row hm"><svg style="left:41.4px;top:19.9px" width="11" height="16" viewBox="0 0 352 512"><path fill="#fff" d="M205.22 22.09c-7.94-28.78-49.44-30.12-58.44 0C100.01 179.85 0 222.72 0 333.91 0 432.35 78.72 512 176 512s176-79.65 176-178.09c0-111.75-99.79-153.34-146.78-311.82zM176 448c-61.75 0-112-50.25-112-112 0-8.84 7.16-16 16-16s16 7.16 16 16c0 44.11 35.89 80 80 80 8.84 0 16 7.16 16 16s-7.16 16-16 16z"/></svg><span class="tx" style="left:0.00px;top:18.34px;font-size:17.50px;color:#fff;font-family:'Liberation Serif',serif;width:275.5px;text-align:center;">0</span><span class="tx" style="left:222.90px;top:22.59px;font-size:12.30px;color:#fff;">%</span></div>
</div>
<div class="card" style="left:348.0px;top:498.0px"><span class="tx" style="left:0.00px;top:20.53px;font-size:15.80px;color:#fff;font-weight:bold;width:286.5px;text-align:center;">Zona 6</span>
<div class="row tp"><svg style="left:41.4px;top:20.2px" width="8.3" height="16.3" viewBox="0 0 256 512"><path fill="#fff" stroke="#fff" stroke-width="24" d="M192 384c0 35.346-28.654 64-64 64s-64-28.654-64-64c0-23.685 12.876-44.349 32-55.417V224c0-17.673 14.327-32 32-32s32 14.327 32 32v104.583c19.124 11.068 32 31.732 32 55.417zm32-84.653c19.912 22.563 32 52.194 32 84.653 0 70.696-57.303 128-128 128-.299 0-.609-.001-.909-.003C56.789 511.509-.357 453.636.002 383.333.166 351.135 12.225 321.755 32 299.347V96c0-53.019 42.981-96 96-96s96 42.981 96 96v203.347zM208 384c0-34.339-19.37-52.19-32-66.502V96c0-26.467-21.533-48-48-48S80 69.533 80 96v221.498c-12.732 14.428-31.825 32.1-31.999 66.08-.224 43.876 35.563 80.116 79.423 80.42L128 464c44.112 0 80-35.888 80-80z"/></svg><span class="tx" style="left:0.00px;top:18.34px;font-size:17.50px;color:#fff;font-family:'Liberation Serif',serif;width:269.5px;text-align:center;">0</span><span class="tx" style="left:219.80px;top:22.59px;font-size:12.30px;color:#fff;">°C</span></div>
<div class="row hm"><svg style="left:41.4px;top:19.9px" width="11" height="16" viewBox="0 0 352 512"><path fill="#fff" d="M205.22 22.09c-7.94-28.78-49.44-30.12-58.44 0C100.01 179.85 0 222.72 0 333.91 0 432.35 78.72 512 176 512s176-79.65 176-178.09c0-111.75-99.79-153.34-146.78-311.82zM176 448c-61.75 0-112-50.25-112-112 0-8.84 7.16-16 16-16s16 7.16 16 16c0 44.11 35.89 80 80 80 8.84 0 16 7.16 16 16s-7.16 16-16 16z"/></svg><span class="tx" style="left:0.00px;top:18.34px;font-size:17.50px;color:#fff;font-family:'Liberation Serif',serif;width:275.5px;text-align:center;">0</span><span class="tx" style="left:222.90px;top:22.59px;font-size:12.30px;color:#fff;">%</span></div>
</div>
</div>
<div id="sb"><div class="th"></div>
<svg style="left:5px;top:7px" width="7" height="4" viewBox="0 0 7 4"><path d="M3.5 0 7 4H0z" fill="#a3a3a3"/></svg>
</div>
</div>
</body>
</html>
